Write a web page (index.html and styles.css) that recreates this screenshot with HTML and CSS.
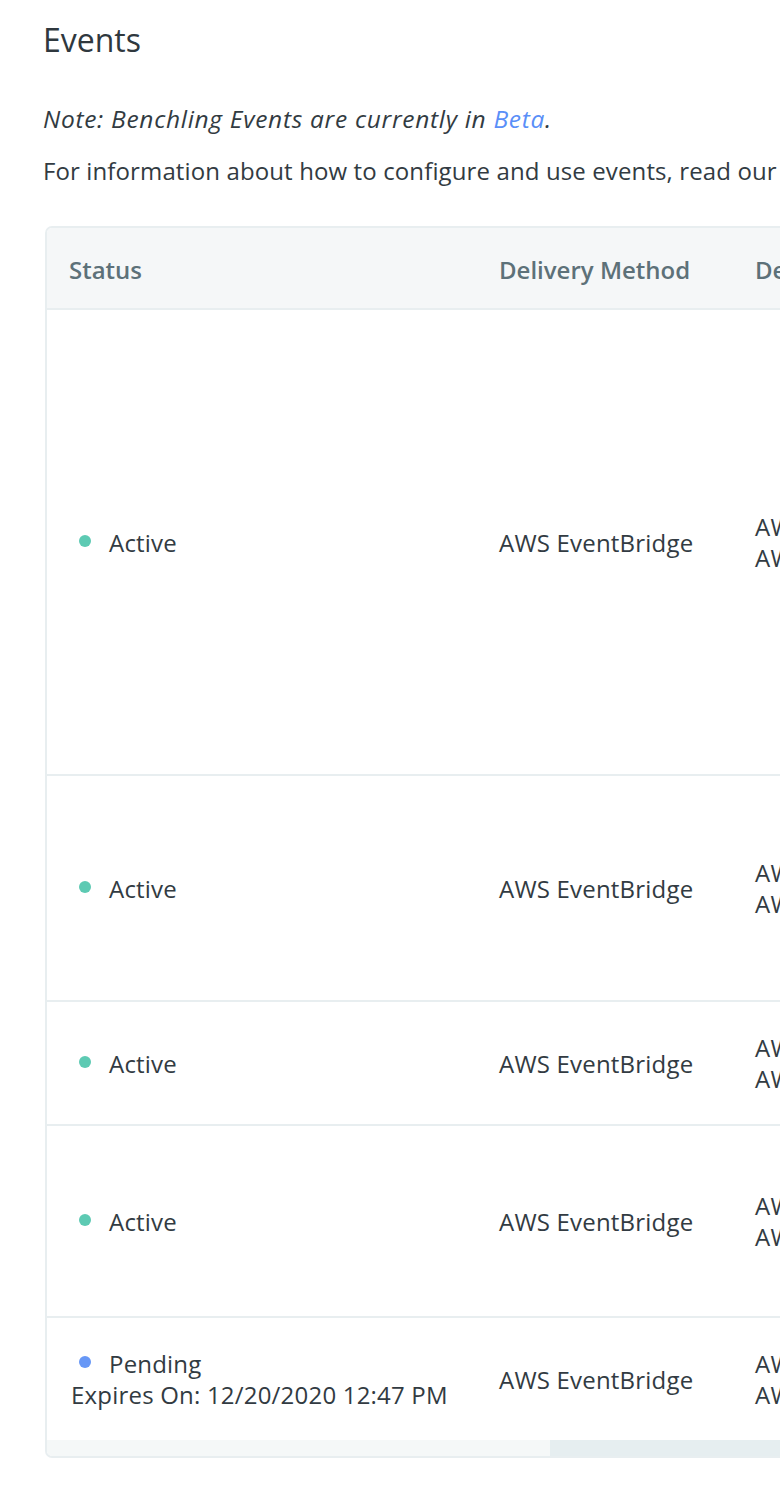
FILE: index.html
```html
<!DOCTYPE html>
<html lang="en">
<head>
<meta charset="utf-8">
<title>Events</title>
<link rel="stylesheet" href="styles.css">
</head>
<body>
<main class="page">
  <h1 class="title">Events</h1>
  <p class="note">Note: Benchling Events are currently in <a class="link" href="#">Beta</a>.</p>
  <p class="info">For information about how to configure and use events, read our</p>
  <div class="table-wrap">
    <table class="events">
      <thead>
        <tr>
          <th class="c1">Status</th>
          <th class="c2">Delivery Method</th>
          <th class="c3">De</th>
        </tr>
      </thead>
      <tbody>
        <tr class="r1">
          <td class="c1"><span class="dot dot-active"></span>Active</td>
          <td class="c2">AWS EventBridge</td>
          <td class="c3">AW<br>AW</td>
        </tr>
        <tr class="r2">
          <td class="c1"><span class="dot dot-active"></span>Active</td>
          <td class="c2">AWS EventBridge</td>
          <td class="c3">AW<br>AW</td>
        </tr>
        <tr class="r3">
          <td class="c1"><span class="dot dot-active"></span>Active</td>
          <td class="c2">AWS EventBridge</td>
          <td class="c3">AW<br>AW</td>
        </tr>
        <tr class="r4">
          <td class="c1"><span class="dot dot-active"></span>Active</td>
          <td class="c2">AWS EventBridge</td>
          <td class="c3">AW<br>AW</td>
        </tr>
        <tr class="r5">
          <td class="c1"><span class="dot dot-pending"></span>Pending<br><span class="expires">Expires On: 12/20/2020 12:47 PM</span></td>
          <td class="c2">AWS EventBridge</td>
          <td class="c3">AW<br>AW</td>
        </tr>
      </tbody>
    </table>
    <div class="scrollbar"><div class="scroll-thumb"></div></div>
  </div>
</main>
</body>
</html>
```

FILE: styles.css
```css
html, body {
  margin: 0;
  padding: 0;
  background: #ffffff;
  overflow: hidden;
}
body {
  font-family: "Open Sans", Lato, sans-serif;
  color: #323b42;
}
.page {
  padding: 22px 0 0 43px;
  width: 737px;
}
.title {
  font-size: 32px;
  font-weight: 400;
  margin: 0;
  line-height: 36px;
  color: #2f383e;
}
.note {
  font-style: italic;
  font-size: 24.5px;
  letter-spacing: 0.7px;
  line-height: 30px;
  margin: 46px 0 0 0;
  white-space: nowrap;
}
.link {
  color: #5a8ff8;
  text-decoration: none;
}
.info {
  font-size: 24px;
  letter-spacing: 0.12px;
  line-height: 30px;
  margin: 22px 0 0 0;
  white-space: nowrap;
}
.table-wrap {
  margin: 40px 0 0 2px;
  width: 800px;
  border: 2px solid #e8eef0;
  border-right: none;
  border-radius: 7px 0 0 7px;
  overflow: hidden;
  background: #fff;
}
.events {
  border-collapse: collapse;
  width: 100%;
  table-layout: fixed;
}
.events th {
  background: #f5f7f8;
  color: #5d7179;
  font-weight: 600;
  font-size: 24px;
  text-align: left;
  height: 78px;
  padding: 2px 0 0 22px;
  border-bottom: 2px solid #e8eef0;
  white-space: nowrap;
}
.events td {
  font-size: 24px;
  letter-spacing: 0.2px;
  line-height: 31px;
  padding: 0 0 0 22px;
  vertical-align: middle;
  border-top: 2px solid #e8eef0;
  white-space: nowrap;
}
.events thead + tbody tr:first-child td {
  border-top: none;
}
.c1 { width: 408px; }
.c2 { width: 234px; }
.c3 { width: auto; }
.events td.c1 {
  padding-left: 24px;
}
.r1 { height: 466px; }
.r2 { height: 226px; }
.r3 { height: 124px; }
.r4 { height: 192px; }
.r5 { height: 123px; }
.dot {
  display: inline-block;
  width: 12px;
  height: 12px;
  border-radius: 50%;
  margin: 0 18px 0 8px;
  vertical-align: 5px;
}
.dot-active { background: #5dcab3; }
.dot-pending { background: #6797f6; }
.scrollbar {
  height: 16px;
  background: #f5f8f8;
  position: relative;
}
.scroll-thumb {
  position: absolute;
  left: 503px;
  top: 0;
  bottom: 0;
  right: 0;
  background: #e6eef0;
}
```
